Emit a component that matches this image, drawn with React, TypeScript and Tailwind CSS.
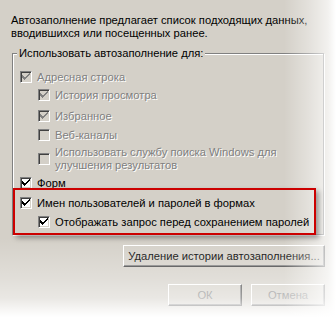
import React from 'react';

type BoxProps = { checked?: boolean; disabled?: boolean };

const CheckBox: React.FC<BoxProps> = ({ checked, disabled }) => (
  <span
    className={`flex-none w-[12px] h-[12px] border border-t-[#808080] border-l-[#808080] border-b-white border-r-white shadow-[inset_1px_1px_0_#404040,inset_-1px_-1px_0_#d4d0c8] flex items-center justify-center ${
      disabled ? 'bg-[#d4d0c8]' : 'bg-white'
    }`}
  >
    {checked && (
      <svg width="8" height="8" viewBox="0 0 8 8" shapeRendering="crispEdges">
        <path
          d="M7 0h1v1H7zM6 1h2v1H6zM0 2h1v1H0zM5 2h2v1H5zM0 3h2v1H0zM4 3h2v1H4zM0 4h5v1H0zM1 5h3v1H1zM2 6h1v1H2z"
          fill={disabled ? '#808080' : '#000'}
        />
      </svg>
    )}
  </span>
);

type RowProps = BoxProps & { label: React.ReactNode; className: string };

const Row: React.FC<RowProps> = ({ checked, disabled, label, className }) => (
  <div className={`flex items-center gap-[5px] ${className}`}>
    <CheckBox checked={checked} disabled={disabled} />
    <span
      className={
        disabled
          ? 'text-[#808080] [text-shadow:1px_1px_0_#fff] whitespace-nowrap'
          : 'text-black whitespace-nowrap'
      }
    >
      {label}
    </span>
  </div>
);

const Button: React.FC<{ className: string; children: React.ReactNode; dim?: boolean }> = ({
  className,
  children,
  dim,
}) => (
  <div
    className={`h-[22px] flex items-center justify-center border border-t-white border-l-white border-b-[#404040] border-r-[#404040] shadow-[inset_-1px_-1px_0_#808080] bg-[#d4d0c8] whitespace-nowrap ${
      dim ? 'text-[#808080]' : 'text-black'
    } ${className}`}
  >
    {children}
  </div>
);

export default function App() {
  return (
    <div className="relative w-[336px] h-[317px] overflow-hidden bg-[#d4d0c8] font-['Liberation_Sans',Arial,sans-serif] text-[11.2px] leading-[13px] text-black select-none">
      {/* intro text */}
      <div className="pt-[14px] pl-[11px]">
        Автозаполнение предлагает список подходящих данных,
        <br />
        вводившихся или посещенных ранее.
      </div>

      {/* group box */}
      <div className="relative mt-[13px] ml-[12px] w-[312px] border border-[#808080] shadow-[inset_1px_1px_0_#fff,1px_1px_0_#fff]">
        <span className="absolute left-[4px] top-[-7px] px-[2px] bg-[#d4d0c8]">
          Использовать автозаполнение для:
        </span>

        <Row className="mt-[17px] pl-[7px] h-[12px]" checked disabled label="Адресная строка" />
        <Row className="mt-[6px] pl-[25px] h-[12px]" checked disabled label="История просмотра" />
        <Row className="mt-[9px] pl-[25px] h-[12px]" checked disabled label="Избранное" />
        <Row className="mt-[7px] pl-[25px] h-[12px]" disabled label="Веб-каналы" />
        <Row
          className="mt-[5px] pl-[25px] h-[26px]"
          disabled
          label={
            <>
              Использовать службу поиска Windows для
              <br />
              улучшения результатов
            </>
          }
        />
        <Row className="mt-[5px] pl-[7px] h-[12px]" checked label="Форм" />

        {/* highlighted area */}
        <div className="relative z-10 mt-[-1px] mb-[-1px] w-[303px] border-2 border-[#cc0000] pl-[5px] pt-[7px] pb-[5px] shadow-[3px_3px_5px_rgba(0,0,0,0.35)]">
          <Row className="h-[12px]" checked label="Имен пользователей и паролей в формах" />
          <Row
            className="mt-[7px] pl-[18px] h-[12px]"
            checked
            label="Отображать запрос перед сохранением паролей"
          />
        </div>
      </div>

      {/* buttons */}
      <div className="flex justify-end pr-[11px] mt-[10px]">
        <Button className="w-[202px]">Удаление истории автозаполнения...</Button>
      </div>
      <div className="flex justify-end gap-[9px] pr-[11px] mt-[17px]">
        <Button className="w-[74px]" dim>
          ОК
        </Button>
        <Button className="w-[74px]" dim>
          Отмена
        </Button>
      </div>

      {/* white fade along the right and bottom edges */}
      <div className="pointer-events-none absolute inset-0 bg-[linear-gradient(to_right,rgba(255,255,255,0)_284px,rgba(255,255,255,0.35)_308px,rgba(255,255,255,0.7)_328px,#fff_336px),linear-gradient(to_bottom,rgba(255,255,255,0)_238px,rgba(255,255,255,0.3)_278px,rgba(255,255,255,0.5)_298px,rgba(255,255,255,0.85)_311px,#fff_317px)]" />
    </div>
  );
}
